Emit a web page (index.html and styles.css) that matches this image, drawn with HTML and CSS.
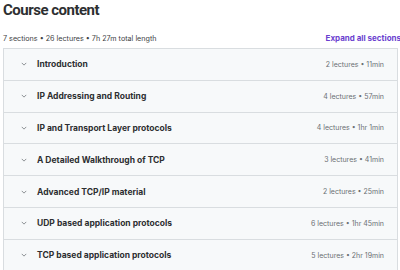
FILE: index.html
```html
<!DOCTYPE html>
<html>
<head>
    <meta charset="UTF-8">
    <title>Course content</title>
    <link rel="stylesheet" href="styles.css">
</head>
<body>
    <div class="course">
        <h2>Course content</h2>

        <div class="summary">
            <span>7 sections • 26 lectures • 7h 27m total length</span>
            <a class="expand" href="#">Expand all sections</a>
        </div>

        <div class="sections">
            <div class="section">
                <svg class="chev" viewBox="0 0 8 5"><path d="M1 1l3 3 3-3"/></svg>
                <span class="title">Introduction</span>
                <span class="meta">2 lectures • 11min</span>
            </div>
            <div class="section">
                <svg class="chev" viewBox="0 0 8 5"><path d="M1 1l3 3 3-3"/></svg>
                <span class="title">IP Addressing and Routing</span>
                <span class="meta">4 lectures • 57min</span>
            </div>
            <div class="section">
                <svg class="chev" viewBox="0 0 8 5"><path d="M1 1l3 3 3-3"/></svg>
                <span class="title">IP and Transport Layer protocols</span>
                <span class="meta">4 lectures • 1hr 1min</span>
            </div>
            <div class="section">
                <svg class="chev" viewBox="0 0 8 5"><path d="M1 1l3 3 3-3"/></svg>
                <span class="title">A Detailed Walkthrough of TCP</span>
                <span class="meta">3 lectures • 41min</span>
            </div>
            <div class="section">
                <svg class="chev" viewBox="0 0 8 5"><path d="M1 1l3 3 3-3"/></svg>
                <span class="title">Advanced TCP/IP material</span>
                <span class="meta">2 lectures • 25min</span>
            </div>
            <div class="section">
                <svg class="chev" viewBox="0 0 8 5"><path d="M1 1l3 3 3-3"/></svg>
                <span class="title">UDP based application protocols</span>
                <span class="meta">6 lectures • 1hr 45min</span>
            </div>
            <div class="section">
                <svg class="chev" viewBox="0 0 8 5"><path d="M1 1l3 3 3-3"/></svg>
                <span class="title">TCP based application protocols</span>
                <span class="meta">5 lectures • 2hr 19min</span>
            </div>
        </div>
    </div>
</body>
</html>
```

FILE: styles.css
```css
body {
    margin: 0;
    background-color: #ffffff;
    font-family: 'Inter', 'Liberation Sans', sans-serif;
    color: #2d2f31;
}

.course {
    padding: 1px 0 0 3px;
    width: 395px;
}

h2 {
    font-family: 'Roboto', 'Liberation Sans', sans-serif;
    font-size: 15px;
    font-weight: 700;
    letter-spacing: -0.5px;
    margin: 0;
    line-height: 18px;
}

.summary {
    display: flex;
    justify-content: space-between;
    align-items: baseline;
    margin-top: 14px;
    font-size: 7.2px;
    color: #3e4143;
}

.expand {
    color: #6b3fcf;
    font-weight: 700;
    font-size: 8px;
    text-decoration: none;
    margin-right: -3px;
}

.sections {
    margin-top: 5px;
    border: 1px solid #d9dde0;
}

.section {
    display: flex;
    align-items: center;
    height: 30.8px;
    background-color: #f7f9fa;
    border-bottom: 1px solid #d9dde0;
    padding: 0 13px 0 17px;
}

.chev {
    width: 6px;
    height: 4px;
    margin-right: 10px;
    fill: none;
    stroke: #6a6f73;
    stroke-width: 1;
}

.title {
    flex: 1;
    font-size: 8.5px;
    font-weight: 700;
}

.meta {
    font-size: 7px;
    color: #6a6f73;
}
```
